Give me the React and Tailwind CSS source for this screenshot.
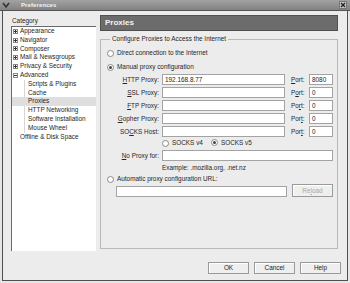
import React from "react";

const Radio = ({ checked }) => (
  <span className="w-[7px] h-[7px] rounded-full border border-[#8a8a8a] bg-white flex items-center justify-center shrink-0">
    {checked && <span className="w-[3px] h-[3px] rounded-full bg-[#444]" />}
  </span>
);

const Field = ({ className = "", children }) => (
  <div className={"h-[11px] bg-white border border-[#a3a3a3] px-[2px] leading-[9px] text-[#222] " + className}>
    {children}
  </div>
);

function ProxyRow({ label, port, value, portValue }) {
  return (
    <div className="flex items-center h-[11px]">
      <div className="w-[52px] text-right">{label}</div>
      <Field className="ml-[3px] w-[123px]">{value}</Field>
      <div className="ml-[6px] w-[18px]">{port}</div>
      <Field className="w-[24px]">{portValue}</Field>
    </div>
  );
}

const Exp = ({ open }) => (
  <span className="w-[5px] h-[5px] border border-[#888] bg-white relative shrink-0 mr-[2px]">
    <span className="absolute left-[0px] top-[1px] w-[3px] h-[1px] bg-[#333]" />
    {!open && <span className="absolute left-[1px] top-[0px] w-[1px] h-[3px] bg-[#333]" />}
  </span>
);

function Btn({ children, disabled, className = "" }) {
  return (
    <div
      className={
        "h-[12px] border border-[#9a9a9a] bg-[#efefef] flex items-center justify-center shadow-[inset_1px_1px_0_#fff] " +
        (disabled ? "text-[#a8a8a8] " : "text-[#222] ") +
        className
      }
    >
      {children}
    </div>
  );
}

export default function App() {
  const top = ["Appearance", "Navigator", "Composer", "Mail & Newsgroups", "Privacy & Security"];
  const kids = ["Scripts & Plugins", "Cache", "Proxies", "HTTP Networking", "Software Installation", "Mouse Wheel"];
  return (
    <div className="w-[350px] h-[283px] bg-[#e6e6e6] flex flex-col overflow-hidden font-['Liberation_Sans',Arial,sans-serif] text-[6.4px] text-[#262626]">
      {/* title bar */}
      <div className="h-[11px] shrink-0 flex items-center bg-gradient-to-b from-[#a2a2a2] to-[#828282] border-b border-[#555]">
        <svg width="8" height="7" viewBox="0 0 8 7" className="ml-[2px]">
          <path d="M1 1 L4 5 L7 1" stroke="#333" strokeWidth="1.6" fill="none" />
        </svg>
        <span className="ml-[11px] text-[6px] font-bold text-[#f2f2f2] tracking-[0.1px]">Preferences</span>
        <div className="ml-auto mr-[3px] w-[8px] h-[8px] bg-[#c8c8c8] border border-[#777] flex items-center justify-center">
          <svg width="6" height="6" viewBox="0 0 6 6">
            <path d="M1 1 L5 5 M5 1 L1 5" stroke="#222" strokeWidth="1.4" />
          </svg>
        </div>
      </div>

      {/* window body */}
      <div className="flex-1 mx-[2px] mb-[2px] border-x border-b border-[#505050] bg-[#ececec] flex flex-col">
        <div className="flex pt-[4px]">
          {/* left column */}
          <div className="ml-[8px] w-[85px] flex flex-col">
            <div className="h-[11px] leading-[8px] pt-[2px] pl-[1px]">Category</div>
            <div className="h-[225px] bg-white border-l border-t border-[#6a6a6a] border-r-[#e0e0e0] border-b-[#f4f4f4] leading-[8.8px]">
              {top.map((t) => (
                <div key={t} className="h-[8.8px] flex items-center pl-[1px]">
                  <Exp />
                  <span>{t}</span>
                </div>
              ))}
              <div className="h-[8.8px] flex items-center pl-[1px]">
                <Exp open />
                <span>Advanced</span>
              </div>
              <div className="ml-[12px] border-l border-[#d6d6d6]">
                {kids.map((t) => (
                  <div
                    key={t}
                    className={
                      "h-[8.8px] flex items-center pl-[3px] " + (t === "Proxies" ? "bg-[#dedede] -ml-[13px] pl-[16px]" : "")
                    }
                  >
                    {t}
                  </div>
                ))}
              </div>
              <div className="h-[8.8px] flex items-center pl-[8px]">Offline &amp; Disk Space</div>
            </div>
          </div>

          {/* right column */}
          <div className="ml-[4px] w-[238px] flex flex-col">
            <div className="h-[16px] bg-[#6c6c6c] border border-[#505050] flex items-center pl-[4px] text-[8px] font-bold text-[#f4f4f4]">
              Proxies
            </div>
            <fieldset className="mt-[4px] h-[214px] border border-[#b9b9b9] pl-[6px] pr-[3px]">
              <legend className="ml-[3px] px-[2px] leading-[8px]">Configure Proxies to Access the Internet</legend>
              <div className="mt-[5px] h-[10px] flex items-center">
                <Radio />
                <span className="ml-[3px]">Direct connection to the Internet</span>
              </div>
              <div className="mt-[4px] h-[10px] flex items-center">
                <Radio checked />
                <span className="ml-[3px]">Manual proxy configuration</span>
              </div>
              <div className="mt-[2px] flex flex-col gap-[2px]">
                <ProxyRow label={<><u>H</u>TTP Proxy:</>} port={<><u>P</u>ort:</>} value="192.168.8.77" portValue="8080" />
                <ProxyRow label={<><u>S</u>SL Proxy:</>} port={<>P<u>o</u>rt:</>} value="" portValue="0" />
                <ProxyRow label={<><u>F</u>TP Proxy:</>} port={<>Po<u>r</u>t:</>} value="" portValue="0" />
                <ProxyRow label={<><u>G</u>opher Proxy:</>} port={<>Por<u>t</u>:</>} value="" portValue="0" />
                <ProxyRow label={<>SO<u>C</u>KS Host:</>} port={<>Por<u>t</u>:</>} value="" portValue="0" />
              </div>
              <div className="mt-[1px] h-[10px] flex items-center pl-[55px]">
                <Radio />
                <span className="ml-[3px]">SOCKS v4</span>
                <span className="ml-[8px] flex items-center">
                  <Radio checked />
                  <span className="ml-[3px]">SOCKS v5</span>
                </span>
              </div>
              <div className="mt-[2px] flex items-center h-[11px]">
                <div className="w-[52px] text-right">
                  <u>N</u>o Proxy for:
                </div>
                <Field className="ml-[3px] w-[171px]" />
              </div>
              <div className="mt-[2px] h-[10px] flex items-center pl-[55px]">Example: .mozilla.org, .net.nz</div>
              <div className="mt-[1px] h-[10px] flex items-center">
                <Radio />
                <span className="ml-[3px]">Automatic proxy configuration URL:</span>
              </div>
              <div className="h-[13px] flex items-end">
                <Field className="ml-[9px] w-[171px] h-[10px]" />
                <Btn disabled className="ml-[5px] w-[41px] h-[13px]">
                  Re<u>l</u>oad
                </Btn>
              </div>
            </fieldset>
          </div>
        </div>

        <div className="mt-[11px] flex justify-end gap-[5px] pr-[6px]">
          <Btn className="w-[41px]">OK</Btn>
          <Btn className="w-[41px]">Cancel</Btn>
          <Btn className="w-[41px]">Help</Btn>
        </div>
      </div>
    </div>
  );
}
